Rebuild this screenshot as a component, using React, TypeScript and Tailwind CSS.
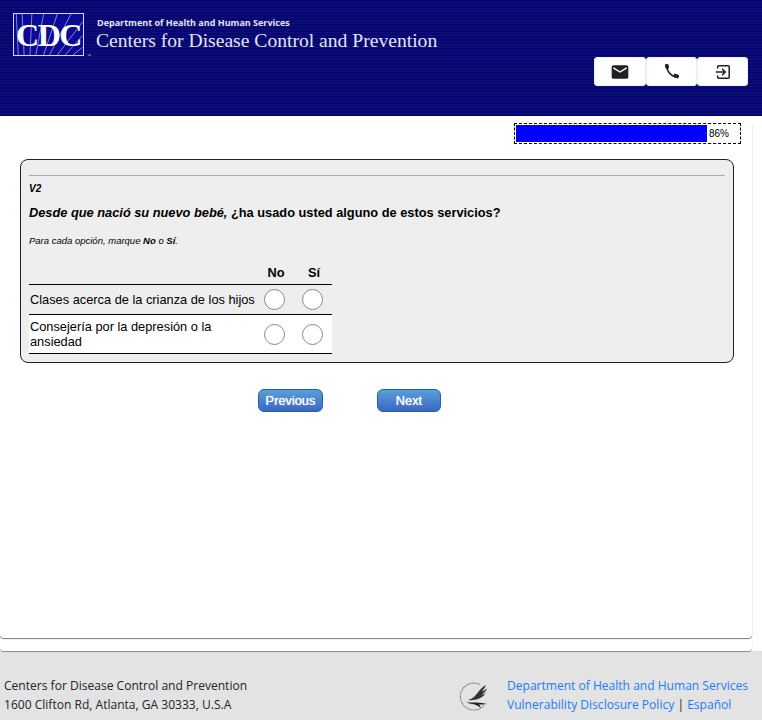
import React from 'react';

const ROWS = [
  { id: 'q1', label: 'Clases acerca de la crianza de los hijos', white: false },
  { id: 'q2', label: 'Consejería por la depresión o la ansiedad', white: true },
];

function CdcLogo() {
  return (
    <div className="relative w-[71px] h-[43px] shrink-0 border border-[#d8d8f0] bg-[#0a0a96]">
      <svg className="absolute inset-0 w-full h-full" viewBox="0 0 70 42" fill="none" stroke="#a8a8e4" strokeWidth="0.8">
        <path d="M4 42L2 0M10 42L8 0M16 42L18 0M22 42L30 0M30 42L44 0M36 42L58 0M44 42L70 8M52 42L70 22M60 42L70 34" />
      </svg>
      <span className="absolute inset-0 flex items-center justify-center text-white font-bold text-[32px] leading-none tracking-[-1.5px] font-['Liberation_Serif',serif]">CDC</span>
      <span className="absolute left-[73px] bottom-[-3px] text-[4px] leading-none text-[#d8d8f0]">™</span>
    </div>
  );
}

function HhsLogo() {
  return (
    <svg width="31" height="31" viewBox="0 0 31 31" fill="none" className="shrink-0">
      <path d="M21 3.500A13.500 13.500 0 1 0 25 24.500" stroke="#777" strokeWidth="1.2" strokeDasharray="1.2 0.7" />
      <path d="M9 19c5-1 8-5 11-9 2-2.500 4-4.500 7-6-1 3-3 4.500-4 6.500 1.500-.5 3-1.500 5-3-1 3-3 4.500-5 6 1 0 2.500-.5 4-1.500-2 3-5 5-8 6-3 1-6 1.500-10 1z" fill="#333" />
      <path d="M7 21.500c6 0 12-.5 16 .5l5 1c-3 .5-6 .5-8 .5 1 1 1.500 2 1.500 3.500-2-2-5-3.500-8-4-2-.3-4-.8-6.500-1.500z" fill="#222" />
    </svg>
  );
}

function Radio() {
  return <span className="block w-[21px] h-[21px] rounded-full border border-[#888] bg-white" />;
}

export default function App() {
  return (
    <div className="min-h-[720px] h-[720px] overflow-hidden bg-white flex flex-col font-['Liberation_Sans',Arial,sans-serif] text-black">
      <header className="h-[116px] shrink-0 flex flex-col bg-[repeating-linear-gradient(to_bottom,#05057a_0px,#05057a_2px,#12126a_2px,#12126a_3px)]">
        <div className="flex items-start gap-[12px] pt-[13px] pl-[13px]">
          <CdcLogo />
          <div className="text-[#e4e4f2] pt-[4px]">
            <div className="text-[9px] leading-[12px] font-bold pl-[1px] font-['Open_Sans',sans-serif]">Department of Health and Human Services</div>
            <div className="text-[19.6px] leading-[24px] whitespace-nowrap font-['Liberation_Serif',serif]">Centers for Disease Control and Prevention</div>
          </div>
        </div>
        <div className="flex justify-end pr-[14px] mt-[1px]">
          <div className="flex">
            <button className="w-[52px] h-[29px] bg-white rounded-[3px] border border-[#eeeef6] flex items-center justify-center">
              <svg width="20" height="20" viewBox="0 0 24 24" fill="#222">
                <path d="M20 4H4c-1.100 0-2 .9-2 2v12c0 1.100.9 2 2 2h16c1.100 0 2-.9 2-2V6c0-1.100-.9-2-2-2zm0 4l-8 5-8-5V6l8 5 8-5v2z" />
              </svg>
            </button>
            <button className="w-[51px] h-[29px] bg-white rounded-[3px] border border-[#eeeef6] flex items-center justify-center">
              <svg width="17" height="17" viewBox="0 0 16 16" fill="#222" stroke="#222">
                <path d="M3.500 3C3.500 8 8 13 13 13" fill="none" strokeWidth="1.700" />
                <rect x="2" y="1" width="3.500" height="4.500" rx="1" transform="rotate(-15 3.700 3.200)" stroke="none" />
                <rect x="10" y="10.500" width="5" height="3.500" rx="1" transform="rotate(20 12.500 12.200)" stroke="none" />
              </svg>
            </button>
            <button className="w-[51px] h-[29px] bg-white rounded-[3px] border border-[#eeeef6] flex items-center justify-center">
              <svg width="16" height="16" viewBox="0 0 18 18" fill="none" stroke="#222" strokeWidth="1.700">
                <path d="M3 5V3.200C3 2.500 3.500 2 4.200 2h10.600c.7 0 1.200.5 1.200 1.200v11.600c0 .7-.5 1.200-1.200 1.200H4.200C3.500 16 3 15.500 3 14.800V13" />
                <path d="M1 9h10M8 5.500 11.500 9 8 12.500" />
              </svg>
            </button>
          </div>
        </div>
      </header>

      <main className="relative z-20 flex-1 mt-[6px] mr-[10px] rounded-[4px] shadow-[0_1px_1px_rgba(0,0,0,0.5),0_0_2px_rgba(0,0,0,0.08)] bg-white flex flex-col">
        <div className="flex justify-end pr-[11px] pt-[1px]">
          <div className="w-[227px] h-[21px] border border-dashed border-black flex items-center px-[1px]">
            <div className="w-[191px] h-[17px] bg-[#0000ff]" />
            <span className="ml-[2px] text-[10px] leading-none">86%</span>
          </div>
        </div>

        <section className="mx-[20px] mt-[15px] h-[204px] w-[714px] border border-[#222] rounded-[8px] bg-[#eeeeee] px-[8px] pt-[15px]">
          <hr className="border-t border-[#aaa]" />
          <p className="mt-[7px] text-[10px] leading-[12px] font-bold italic">V2</p>
          <p className="mt-[10px] text-[12.8px] leading-[16px] font-bold whitespace-nowrap">
            <em>Desde que nació su nuevo bebé,</em> ¿ha usado usted alguno de estos servicios?
          </p>
          <p className="mt-[14px] text-[9.5px] leading-[12px] italic">
            Para cada opción, marque <b>No</b> o <b>Sí</b>.
          </p>
          <div className="w-[303px] mt-[18px]">
            <div className="flex h-[20px] border-b border-black text-[12.8px] leading-[15px] font-bold items-start justify-end">
              <span className="w-[38px] text-center pl-[2px]">No</span>
              <span className="w-[38px] text-center pl-[2px]">Sí</span>
            </div>
            {ROWS.map(r => (
              <div key={r.id} className={`flex items-center border-b border-black text-[12.8px] leading-[15px] pl-[1px] ${r.white ? 'bg-white h-[39px]' : 'h-[30px]'}`}>
                <span className="w-[225px]">{r.label}</span>
                <div className="w-[38px] flex justify-center"><Radio /></div>
                <div className="w-[38px] flex justify-center pl-[1px]"><Radio /></div>
              </div>
            ))}
          </div>
        </section>

        <div className="flex justify-center gap-[54px] mt-[26px] pr-[53px]">
          <button className="w-[65px] h-[23px] rounded-[6px] border border-[#1f6a8c] bg-gradient-to-b from-[#5b9fd8] to-[#3c66c8] text-white text-[12.8px] [text-shadow:0_0_1px_#fff]">Previous</button>
          <button className="w-[64px] h-[23px] rounded-[6px] border border-[#1f6a8c] bg-gradient-to-b from-[#5b9fd8] to-[#3c66c8] text-white text-[12.8px] [text-shadow:0_0_1px_#fff]">Next</button>
        </div>
      </main>

      <div className="relative z-10 h-[13px] shrink-0 mr-[10px] rounded-b-[4px] bg-white shadow-[0_1px_1px_rgba(0,0,0,0.4)]" />

      <footer className="h-[69px] shrink-0 bg-[#e3e3e3] flex justify-between pt-[25px] pl-[4px] pr-[14px] text-[12.05px] leading-[19px] text-[#212529] font-['Open_Sans',sans-serif]">
        <div>
          <div>Centers for Disease Control and Prevention</div>
          <div>1600 Clifton Rd, Atlanta, GA 30333, U.S.A</div>
        </div>
        <div className="flex gap-[17px] mt-[5px]">
          <HhsLogo />
          <div className="mt-[-5px] text-[#1a7cff]">
            <div>Department of Health and Human Services</div>
            <div>Vulnerability Disclosure Policy <span className="text-[#212529]">|</span> Español</div>
          </div>
        </div>
      </footer>
    </div>
  );
}
